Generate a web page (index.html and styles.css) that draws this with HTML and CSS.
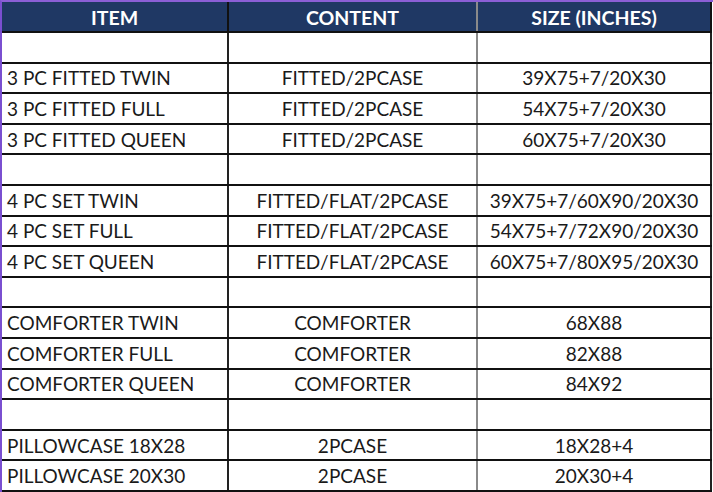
FILE: index.html
```html
<!DOCTYPE html>
<html>
<head>
<meta charset="utf-8">
<link rel="stylesheet" href="styles.css">
</head>
<body>
<div class="frame">
<table class="sheet">
  <colgroup><col class="c1"><col class="c2"><col class="c3"></colgroup>
  <thead>
    <tr><th>ITEM</th><th class="mid">CONTENT</th><th>SIZE (INCHES)</th></tr>
  </thead>
  <tbody>
    <tr><td></td><td class="mid"></td><td></td></tr>
    <tr><td class="item">3 PC FITTED TWIN</td><td class="mid">FITTED/2PCASE</td><td>39X75+7/20X30</td></tr>
    <tr><td class="item">3 PC FITTED FULL</td><td class="mid">FITTED/2PCASE</td><td>54X75+7/20X30</td></tr>
    <tr><td class="item">3 PC FITTED QUEEN</td><td class="mid">FITTED/2PCASE</td><td>60X75+7/20X30</td></tr>
    <tr><td></td><td class="mid"></td><td></td></tr>
    <tr><td class="item">4 PC SET TWIN</td><td class="mid">FITTED/FLAT/2PCASE</td><td>39X75+7/60X90/20X30</td></tr>
    <tr><td class="item">4 PC SET FULL</td><td class="mid">FITTED/FLAT/2PCASE</td><td>54X75+7/72X90/20X30</td></tr>
    <tr><td class="item">4 PC SET QUEEN</td><td class="mid">FITTED/FLAT/2PCASE</td><td>60X75+7/80X95/20X30</td></tr>
    <tr><td></td><td class="mid"></td><td></td></tr>
    <tr><td class="item">COMFORTER TWIN</td><td class="mid">COMFORTER</td><td>68X88</td></tr>
    <tr><td class="item">COMFORTER FULL</td><td class="mid">COMFORTER</td><td>82X88</td></tr>
    <tr><td class="item">COMFORTER QUEEN</td><td class="mid">COMFORTER</td><td>84X92</td></tr>
    <tr><td></td><td class="mid"></td><td></td></tr>
    <tr><td class="item">PILLOWCASE 18X28</td><td class="mid">2PCASE</td><td>18X28+4</td></tr>
    <tr><td class="item">PILLOWCASE 20X30</td><td class="mid">2PCASE</td><td>20X30+4</td></tr>
  </tbody>
</table>
</div>
</body>
</html>
```
FILE: styles.css
```css
html, body {
  margin: 0;
  padding: 0;
  background: #ffffff;
}
.frame {
  width: 713px;
  height: 492px;
  box-sizing: border-box;
  border-top: 2px solid #8b5fd6;
  border-left: 2px solid #7a4fd0;
  overflow: hidden;
  display: flex;
}
.sheet {
  border-collapse: collapse;
  table-layout: fixed;
  width: 709px;
  font-family: Lato, "Open Sans", sans-serif;
  font-size: 19px;
  color: #1a1a1a;
  border-right: 2px solid #333;
  margin-right: 1px;
}
.frame::after {
  content: "";
  width: 1px;
  background: #a98be6;
}
.c1 { width: 226px; }
.c2 { width: 249px; }
.c3 { width: 234px; }
th {
  background: #1f3864;
  color: #ffffff;
  font-weight: 700;
  font-size: 19.5px;
  height: 30px;
  padding: 2px 0 0 0;
  box-sizing: border-box;
  text-align: center;
  border-bottom: 2px solid #111;
  border-right: 2px solid #111;
}
td {
  height: 28.5px;
  padding: 0;
  text-align: center;
  border-bottom: 2px solid #111;
  border-right: 2px solid #222;
  white-space: nowrap;
}
td.item {
  text-align: left;
  padding-left: 5px;
}
td.mid, th.mid {
  border-right-color: #8a8a8a;
}
```
